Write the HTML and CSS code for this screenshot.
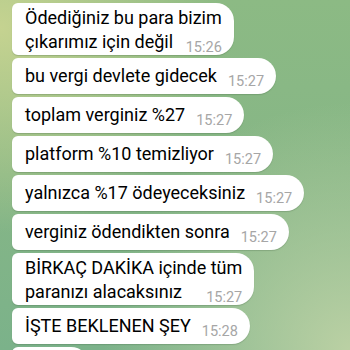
FILE: index.html
```html
<!DOCTYPE html>
<html>
<head>
    <title>Chat</title>
    <link rel="stylesheet" href="styles.css">
</head>
<body>
    <div class="chat">
        <div class="msg multi">Ödediğiniz bu para bizim<br>çıkarımız için değil<span class="time">15:26</span></div>
        <div class="msg">bu vergi devlete gidecek<span class="time">15:27</span></div>
        <div class="msg">toplam verginiz %27<span class="time">15:27</span></div>
        <div class="msg">platform %10 temizliyor<span class="time">15:27</span></div>
        <div class="msg">yalnızca %17 ödeyeceksiniz<span class="time">15:27</span></div>
        <div class="msg">verginiz ödendikten sonra<span class="time">15:27</span></div>
        <div class="msg multi">BİRKAÇ DAKİKA içinde tüm<br>paranızı alacaksınız<span class="time">15:27</span></div>
        <div class="msg">İŞTE BEKLENEN ŞEY<span class="time">15:28</span></div>
        <div class="msg">&nbsp;<span class="time">15:28</span></div>
    </div>
</body>
</html>
```

FILE: styles.css
```css
html, body {
    margin: 0;
    height: 100%;
    overflow: hidden;
}
body {
    font-family: Roboto, 'Noto Sans', sans-serif;
    background:
        radial-gradient(ellipse at 0% 8%, rgba(200, 212, 145, 0.95), rgba(200, 212, 145, 0) 45%),
        radial-gradient(ellipse at 100% 100%, rgba(190, 210, 165, 0.95), rgba(190, 210, 165, 0) 50%),
        linear-gradient(180deg, #8cba84 0%, #86b686 50%, #7bb28a 100%);
}
.chat {
    display: flex;
    flex-direction: column;
    align-items: flex-start;
    gap: 3px;
    padding: 3px 0 0 12px;
}
.msg {
    background: #fff;
    color: #000;
    font-size: 18px;
    line-height: 24px;
    padding: 6px 12px 6px 13px;
    border-radius: 6px 18px 18px 6px;
    box-shadow: 0 1px 1px rgba(60, 90, 60, 0.25);
    white-space: nowrap;
}
.msg.multi {
    padding-top: 3px;
    padding-bottom: 1px;
}
.time {
    float: right;
    font-size: 14.5px;
    line-height: 17px;
    color: #a6a6a6;
    margin: 9px 0 -9px 11px;
}
```
